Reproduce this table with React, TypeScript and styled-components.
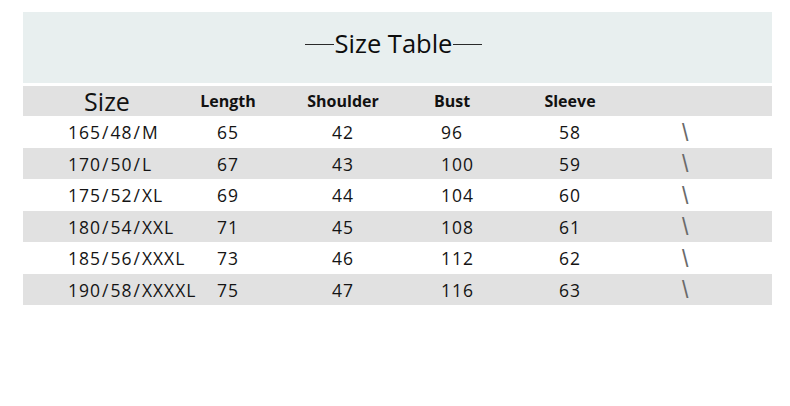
import React from "react";
import styled, { createGlobalStyle } from "styled-components";

const GlobalStyle = createGlobalStyle`
  html, body {
    margin: 0;
    padding: 0;
    background: #ffffff;
  }
  body {
    font-family: "Open Sans", "Liberation Sans", sans-serif;
    color: #141414;
  }
`;

const Page = styled.div`
  width: 790px;
  height: 406px;
  padding: 12px 0 0 23px;
  box-sizing: border-box;
  overflow: hidden;
`;

const Table = styled.div`
  width: 749px;
  display: flex;
  flex-direction: column;
`;

const TitleBand = styled.div`
  height: 71px;
  background: #e8efef;
  display: flex;
  align-items: center;
  justify-content: center;
  margin-bottom: 3px;
  padding-right: 8px;
`;

const Title = styled.div`
  display: flex;
  align-items: center;
  gap: 1px;
  font-size: 25.5px;
  color: #0d0d0d;
  padding-bottom: 9px;

  &::before,
  &::after {
    content: "";
    width: 29px;
    height: 1px;
    background: #2a2a2a;
    margin-top: 3px;
  }
`;

const Row = styled.div<{ $shade?: boolean; $h: number }>`
  display: grid;
  grid-template-columns: 149px 115px 109px 118px 126px 1fr;
  align-items: center;
  padding-left: 45px;
  height: ${(p) => p.$h}px;
  background: ${(p) => (p.$shade ? "#e1e1e1" : "#ffffff")};
`;

const HeadLabel = styled.div<{ $w?: number }>`
  width: ${(p) => p.$w ?? 22}px;
  display: flex;
  justify-content: center;
  white-space: nowrap;
  font-family: "Open Sans", "Liberation Sans", sans-serif;
  font-weight: 700;
  font-size: 16px;
  line-height: 20px;
  color: #111;
  padding-bottom: 8px;
`;

const SizeLabel = styled(HeadLabel)`
  font-weight: 400;
  font-size: 25px;
  line-height: 30px;
  color: #111;
  padding-bottom: 7px;
`;

const Cell = styled.div`
  white-space: nowrap;
  font-size: 17.5px;
  letter-spacing: 1px;
  color: #141414;
`;

const Slash = styled.span`
  margin: 0 1px;
`;

const Dash = styled.div`
  font-family: "Liberation Sans", sans-serif;
  font-size: 23px;
  line-height: 24px;
  color: #6a6a6a;
  padding-top: 1px;
  margin-left: -3px;
`;

const rows = [
  ["165", "48", "M", 65, 42, 96, 58],
  ["170", "50", "L", 67, 43, 100, 59],
  ["175", "52", "XL", 69, 44, 104, 60],
  ["180", "54", "XXL", 71, 45, 108, 61],
  ["185", "56", "XXXL", 73, 46, 112, 62],
  ["190", "58", "XXXXL", 75, 47, 116, 63],
];

const App = () => {
  return (
    <Page>
      <GlobalStyle />
      <Table>
        <TitleBand>
          <Title>Size Table</Title>
        </TitleBand>
        <Row $shade $h={30}>
          <SizeLabel $w={78}>Size</SizeLabel>
          <HeadLabel>Length</HeadLabel>
          <HeadLabel>Shoulder</HeadLabel>
          <HeadLabel>Bust</HeadLabel>
          <HeadLabel>Sleeve</HeadLabel>
          <div />
        </Row>
        {rows.map((r, i) => (
          <Row key={i} $shade={i % 2 === 1} $h={i % 2 === 1 ? 31 : 32}>
            <Cell>
              {r[0]}
              <Slash>/</Slash>
              {r[1]}
              <Slash>/</Slash>
              {r[2]}
            </Cell>
            <Cell>{r[3]}</Cell>
            <Cell>{r[4]}</Cell>
            <Cell>{r[5]}</Cell>
            <Cell>{r[6]}</Cell>
            <Dash>\</Dash>
          </Row>
        ))}
      </Table>
    </Page>
  );
};

export default App;
